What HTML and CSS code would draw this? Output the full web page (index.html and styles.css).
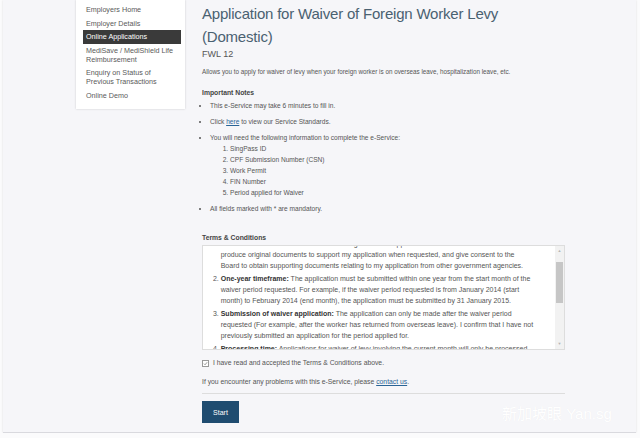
FILE: index.html
```html
<!DOCTYPE html>
<html lang="en">
<head>
    <meta charset="UTF-8">
    <meta name="viewport" content="width=device-width, initial-scale=1.0">
    <title>Application for Waiver of Foreign Worker Levy (Domestic)</title>
    <link rel="stylesheet" href="styles.css">
</head>
<body>
    <div class="page">
        <nav class="sidebar">
            <a href="#">Employers Home</a>
            <a href="#">Employer Details</a>
            <a href="#" class="active">Online Applications</a>
            <a href="#">MediSave / MediShield Life Reimbursement</a>
            <a href="#">Enquiry on Status of Previous Transactions</a>
            <a href="#">Online Demo</a>
        </nav>

        <main class="content">
            <h1>Application for Waiver of Foreign Worker Levy<br>(Domestic)</h1>
            <p class="code">FWL 12</p>
            <p class="intro">Allows you to apply for waiver of levy when your foreign worker is on overseas leave, hospitalization leave, etc.</p>

            <h2>Important Notes</h2>
            <ul class="notes">
                <li>This e-Service may take 6 minutes to fill in.</li>
                <li>Click <a href="#">here</a> to view our Service Standards.</li>
                <li>You will need the following information to complete the e-Service:
                    <ol>
                        <li>SingPass ID</li>
                        <li>CPF Submission Number (CSN)</li>
                        <li>Work Permit</li>
                        <li>FIN Number</li>
                        <li>Period applied for Waiver</li>
                    </ol>
                </li>
                <li>All fields marked with * are mandatory.</li>
            </ul>

            <h2 class="terms-title">Terms &amp; Conditions</h2>
            <div class="terms-box">
                <div class="terms-text">
                    <ol>
                        <li><b>Declaration:</b> I declare that the information given in this application is true and correct. I will<br>produce original documents to support my application when requested, and give consent to the<br>Board to obtain supporting documents relating to my application from other government agencies.</li>
                        <li><b>One-year timeframe:</b> The application must be submitted within one year from the start month of the<br>waiver period requested. For example, if the waiver period requested is from January 2014 (start<br>month) to February 2014 (end month), the application must be submitted by 31 January 2015.</li>
                        <li><b>Submission of waiver application:</b> The application can only be made after the waiver period<br>requested (For example, after the worker has returned from overseas leave). I confirm that I have not<br>previously submitted an application for the period applied for.</li>
                        <li><b>Processing time:</b> Applications for waiver of levy involving the current month will only be processed<br>after the levy bill for that month has been issued.</li>
                    </ol>
                </div>
                <div class="scrollbar">
                    <span class="arrow">&#9650;</span>
                    <span class="thumb"></span>
                    <span class="track"></span>
                    <span class="arrow">&#9660;</span>
                </div>
            </div>

            <label class="agree"><span class="checkbox"><svg viewBox="0 0 8 8"><path d="M1.5 4.2 L3.3 6 L6.6 2" fill="none" stroke="#777" stroke-width="1.2"/></svg></span><span>I have read and accepted the Terms &amp; Conditions above.</span></label>

            <p class="help">If you encounter any problems with this e-Service, please <a href="#">contact us</a>.</p>
            <hr>
            <button class="start">Start</button>
        </main>

        <div class="watermark">新加坡眼 Yan.sg</div>
    </div>
</body>
</html>
```

FILE: styles.css
```css
body {
    margin: 0;
    background-color: #fbfbfc;
    font-family: "Liberation Sans", Arial, sans-serif;
    color: #555;
}
.page {
    position: relative;
    display: flex;
    align-items: flex-start;
    margin-left: 3px;
    width: 633px;
    height: 432px;
    background-color: #f6f6f9;
    border-bottom: 1px solid #d9d9de;
    box-shadow: 0 0 2px rgba(0, 0, 0, 0.12);
}
.sidebar {
    margin-left: 73px;
    width: 109px;
    box-sizing: border-box;
    padding: 3px 4px 6.5px 7px;
    background-color: #fff;
    box-shadow: 0 0 2px rgba(0, 0, 0, 0.18);
}
.sidebar a {
    display: block;
    padding: 2.25px 3px;
    font-size: 7.2px;
    line-height: 9px;
    color: #5a5a5a;
    text-decoration: none;
}
.sidebar a.active {
    background-color: #3a3a3a;
    color: #fff;
}
.content {
    margin-left: 17px;
    width: 363px;
}
h1 {
    margin: 1.5px 0 0;
    font-size: 15px;
    line-height: 23px;
    font-weight: normal;
    letter-spacing: -0.2px;
    color: #4a6171;
}
.code {
    margin: 0;
    font-size: 9px;
    line-height: 12px;
}
.intro {
    margin: 7px 0 0;
    font-size: 6.3px;
    line-height: 10px;
}
h2 {
    margin: 11.7px 0 0;
    font-size: 6.8px;
    line-height: 10px;
    color: #444;
}
a {
    color: #2a6496;
}
.notes {
    margin: 3.3px 0 0;
    padding-left: 8px;
    font-size: 6.6px;
    line-height: 10px;
}
.notes > li {
    margin-bottom: 6px;
}
.notes ol {
    margin: 0;
    padding-left: 20px;
    line-height: 11px;
}
.terms-title {
    margin-top: 19px;
}
.terms-box {
    display: flex;
    margin-top: 2px;
    height: 105px;
    box-sizing: border-box;
    border: 1px solid #ddd;
    background-color: #fff;
}
.terms-text {
    flex: 1;
    overflow: hidden;
    font-size: 7px;
    line-height: 11px;
    white-space: nowrap;
}
.terms-text ol {
    margin: -8px 0 0;
    padding-left: 17.7px;
}
.terms-text li {
    margin-bottom: 2px;
}
.terms-text b {
    color: #333;
}
.scrollbar {
    display: flex;
    flex-direction: column;
    width: 9px;
    background-color: #f2f2f2;
}
.arrow {
    height: 10px;
    font-size: 4px;
    line-height: 10px;
    text-align: center;
    color: #b5b5b5;
}
.thumb {
    margin: 6px 1px 0;
    height: 41px;
    background-color: #c6c6c6;
}
.track {
    flex: 1;
}
.agree {
    display: flex;
    align-items: center;
    gap: 4px;
    margin-top: 8px;
    font-size: 6.8px;
    line-height: 10px;
}
.checkbox {
    display: flex;
    width: 7px;
    height: 7px;
    border: 1px solid #999;
    box-sizing: border-box;
    background-color: #fff;
}
.checkbox svg {
    width: 100%;
    height: 100%;
}
.help {
    margin: 8.7px 0 0;
    font-size: 6.8px;
    line-height: 10px;
}
hr {
    margin: 6px 0 0;
    border: none;
    border-top: 1px solid #ddd;
}
.start {
    display: block;
    margin-top: 7px;
    width: 37px;
    height: 22px;
    padding: 0;
    border: none;
    background-color: #1f4c70;
    color: #fff;
    font-family: "Liberation Sans", Arial, sans-serif;
    font-size: 7px;
}
.watermark {
    position: absolute;
    left: 499px;
    top: 404px;
    font-family: "Liberation Sans", "Noto Sans CJK SC", sans-serif;
    font-size: 15px;
    line-height: 20px;
    color: #fff;
    text-shadow: 0 0 1px rgba(0, 0, 0, 0.05);
}
```
